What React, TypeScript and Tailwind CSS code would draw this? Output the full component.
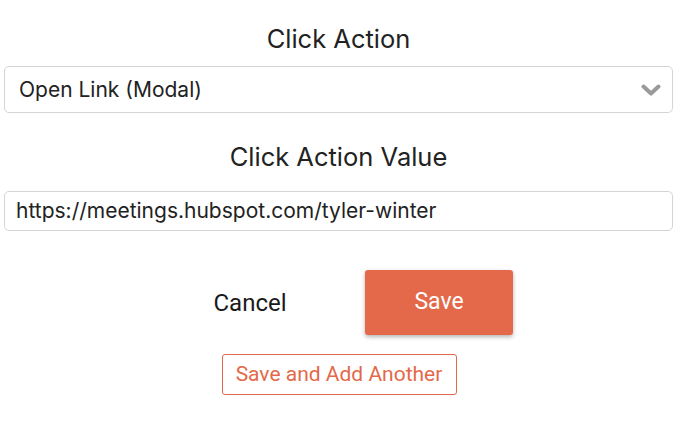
export default function App() {
  return (
    <div className="w-[690px] h-[434px] bg-white pl-[4px] pr-[17px] pt-[21px] font-['Inter',sans-serif] text-[#222]">
      <h2 className="text-center text-[25.5px] leading-[36px]">Click Action</h2>

      <div className="mt-[9px] h-[47px] border border-[#d4d4d4] rounded-[5px] flex items-center justify-between pl-[14px] pr-[11px]">
        <span className="text-[21px] text-[#222]">Open Link (Modal)</span>
        <svg width="20" height="12" viewBox="0 0 20 12" className="mt-[1px]">
          <polyline points="2.5,2.5 10,9.5 17.5,2.5" fill="none" stroke="#9a9a9a" strokeWidth="4" strokeLinecap="round" strokeLinejoin="round" />
        </svg>
      </div>

      <h2 className="mt-[26px] text-center text-[25.5px] leading-[36px]">Click Action Value</h2>

      <div className="mt-[16px] h-[40px] border border-[#d4d4d4] rounded-[5px] flex items-center px-[11px]">
        <span className="text-[21px] text-[#222]">https://meetings.hubspot.com/tyler-winter</span>
      </div>

      <div className="mt-[39px] flex items-center font-['Roboto',sans-serif]">
        <button className="ml-[172px] w-[148px] h-[65px] text-[24px] text-[#1a1a1a]">Cancel</button>
        <button className="ml-[41px] w-[148px] h-[65px] rounded-[3px] bg-[#e3694a] text-white text-[23px] shadow-[0_2px_4px_rgba(0,0,0,0.3)]">
          Save
        </button>
      </div>

      <div className="mt-[19px] flex justify-center font-['Roboto',sans-serif]">
        <button className="ml-[1px] w-[235px] h-[41px] border border-[#e3694a] rounded-[3px] text-[#e3694a] text-[21px]">
          Save and Add Another
        </button>
      </div>
    </div>
  );
}
